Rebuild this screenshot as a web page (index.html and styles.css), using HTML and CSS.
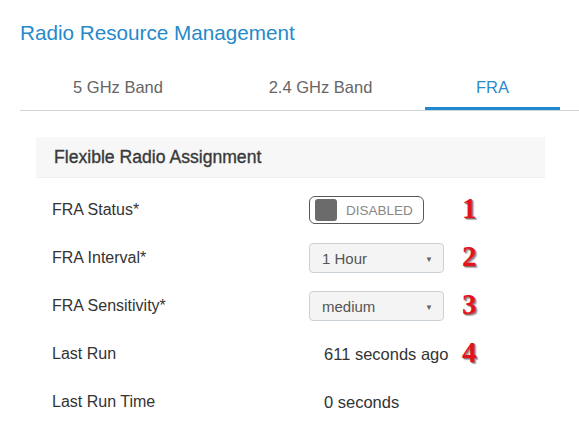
FILE: index.html
```html
<!DOCTYPE html>
<html>
<head>
<meta charset="utf-8">
<link rel="stylesheet" href="styles.css">
</head>
<body>
<div class="page">
  <h1 class="title">Radio Resource Management</h1>
  <div class="tabs">
    <div class="tab tab-5">5 GHz Band</div>
    <div class="tab tab-24">2.4 GHz Band</div>
    <div class="tab tab-fra active">FRA</div>
  </div>
  <div class="panel">
    <div class="panel-head">Flexible Radio Assignment</div>
    <div class="rows">
      <div class="row">
        <div class="label">FRA Status*</div>
        <div class="cell">
          <div class="toggle"><span class="knob"></span><span class="toggle-text">DISABLED</span></div>
        </div>
        <div class="mark">1</div>
      </div>
      <div class="row">
        <div class="label">FRA Interval*</div>
        <div class="cell">
          <div class="select"><span>1 Hour</span><span class="caret">&#9660;</span></div>
        </div>
        <div class="mark">2</div>
      </div>
      <div class="row">
        <div class="label">FRA Sensitivity*</div>
        <div class="cell">
          <div class="select"><span>medium</span><span class="caret">&#9660;</span></div>
        </div>
        <div class="mark">3</div>
      </div>
      <div class="row">
        <div class="label">Last Run</div>
        <div class="cell value">611 seconds ago</div>
        <div class="mark">4</div>
      </div>
      <div class="row">
        <div class="label">Last Run Time</div>
        <div class="cell value">0 seconds</div>
        <div class="mark"></div>
      </div>
    </div>
  </div>
</div>
</body>
</html>
```

FILE: styles.css
```css
html, body {
  margin: 0;
  padding: 0;
  background: #ffffff;
}

body {
  font-family: "Liberation Sans", Arial, sans-serif;
  color: #333333;
}

.page {
  padding: 20px 0 0 20px;
}

.title {
  margin: 0;
  font-size: 20.7px;
  line-height: 25px;
  font-weight: normal;
  color: #2689c9;
}

.tabs {
  display: flex;
  margin-top: 32px;
  border-bottom: 1px solid #d4d4d4;
}

.tab {
  padding-bottom: 10px;
  text-align: center;
  font-size: 16.5px;
  line-height: 20px;
  color: #666666;
  border-bottom: 3px solid transparent;
}

.tab-5 {
  width: 196px;
}

.tab-24 {
  width: 209px;
}

.tab-fra {
  width: 135px;
}

.tab.active {
  color: #2a8bcd;
  border-bottom-color: #1f8ad2;
  border-radius: 2px 2px 0 0;
}

.panel {
  margin: 26px 0 0 16px;
  width: 509px;
}

.panel-head {
  height: 41px;
  line-height: 41px;
  padding-left: 18px;
  background: #f7f7f7;
  border-bottom: 1px solid #efefef;
  box-sizing: border-box;
  font-size: 17.6px;
  color: #3a3a3a;
  -webkit-text-stroke: 0.35px #3a3a3a;
}

.rows {
  padding-top: 8px;
}

.row {
  display: grid;
  grid-template-columns: 239px 135px 1fr;
  column-gap: 18px;
  align-items: center;
  height: 48px;
  padding-left: 16px;
}

.label {
  font-size: 16px;
  color: #333333;
}

.value {
  padding-left: 15px;
  font-size: 16.5px;
  color: #333333;
  white-space: nowrap;
}

.toggle {
  display: flex;
  align-items: center;
  gap: 9px;
  width: 115px;
  height: 28px;
  box-sizing: border-box;
  padding-left: 5px;
  border: 1.5px solid #595959;
  border-radius: 6px;
}

.knob {
  width: 22px;
  height: 22px;
  border-radius: 3px;
  background: #6b6b6b;
}

.toggle-text {
  font-size: 13.5px;
  color: #888888;
}

.select {
  display: flex;
  align-items: center;
  justify-content: space-between;
  width: 135px;
  height: 30px;
  box-sizing: border-box;
  padding: 0 10px 0 12px;
  background: #f4f4f4;
  border: 1px solid #c9d1d7;
  border-radius: 4px;
  font-size: 15px;
  color: #555555;
}

.caret {
  font-size: 8px;
  color: #666666;
  padding-top: 3px;
}

.mark {
  font-family: "Liberation Serif", "Times New Roman", serif;
  font-weight: bold;
  font-size: 29px;
  line-height: 30px;
  color: #e3121c;
  text-shadow: 1px 1px 0 #9a6b6b, 2px 2px 1px rgba(120, 120, 120, 0.6);
  margin-top: -4px;
}
```
